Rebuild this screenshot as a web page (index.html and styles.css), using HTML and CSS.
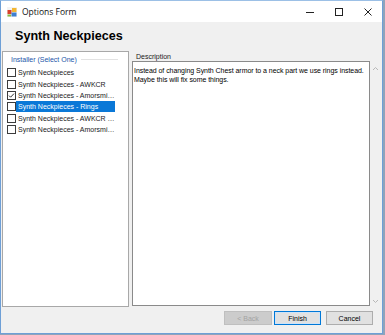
FILE: index.html
```html
<!DOCTYPE html>
<html lang="en">
<head>
  <meta charset="UTF-8" />
  <title>Options Form</title>
  <link rel="stylesheet" href="styles.css">
</head>
<body>
<div class="window">
  <div class="titlebar">
    <svg class="app-icon" width="10" height="10" viewBox="0 0 10 10">
      <rect x="0" y="0" width="10" height="10" fill="#f3f3f3"/>
      <rect x="0.5" y="3" width="4" height="4" fill="#d9412b"/>
      <rect x="5" y="1" width="4.5" height="4" fill="#f2b632"/>
      <rect x="4.5" y="5.5" width="5" height="4" fill="#3e7fd1"/>
      <rect x="0.5" y="7.5" width="3.5" height="2" fill="#8bb83e"/>
    </svg>
    <span class="title">Options Form</span>
    <div class="controls">
      <div class="ctl">
        <svg width="10" height="10" viewBox="0 0 10 10"><path d="M1 5.5h8" stroke="#222" stroke-width="1"/></svg>
      </div>
      <div class="ctl">
        <svg width="10" height="10" viewBox="0 0 10 10"><rect x="1.5" y="1.5" width="7" height="7" fill="none" stroke="#222" stroke-width="1"/></svg>
      </div>
      <div class="ctl">
        <svg width="10" height="10" viewBox="0 0 10 10"><path d="M1.5 1.5l7 7M8.5 1.5l-7 7" stroke="#222" stroke-width="1"/></svg>
      </div>
    </div>
  </div>

  <div class="header">Synth Neckpieces</div>

  <div class="main">
    <div class="installer">
      <div class="legend"><span>Installer (Select One)</span></div>
      <div class="item"><span class="box"></span><span class="label">Synth Neckpieces</span></div>
      <div class="item"><span class="box"></span><span class="label">Synth Neckpieces - AWKCR</span></div>
      <div class="item">
        <span class="box">
          <svg width="7" height="7" viewBox="0 0 7 7"><path d="M1 3.6l1.6 1.6L6 1.6" fill="none" stroke="#333" stroke-width="1"/></svg>
        </span>
        <span class="label">Synth Neckpieces - Amorsmith Extended</span>
      </div>
      <div class="item"><span class="box"></span><span class="label selected">Synth Neckpieces - Rings</span></div>
      <div class="item"><span class="box"></span><span class="label">Synth Neckpieces - AWKCR Rings</span></div>
      <div class="item"><span class="box"></span><span class="label">Synth Neckpieces - Amorsmith Rings</span></div>
    </div>

    <div class="desc">
      <div class="desc-label">Description</div>
      <div class="desc-area">
        <div class="textbox">Instead of changing Synth Chest armor to a neck part we use rings instead.<br>Maybe this will fix some things.</div>
        <div class="scroll">
          <svg width="7" height="5" viewBox="0 0 7 5"><path d="M1 4l2.5-2.5L6 4" fill="none" stroke="#b8b8b8" stroke-width="1"/></svg>
          <svg width="7" height="5" viewBox="0 0 7 5"><path d="M1 1l2.5 2.5L6 1" fill="none" stroke="#b8b8b8" stroke-width="1"/></svg>
        </div>
      </div>
    </div>
  </div>

  <div class="buttons">
    <button class="btn back" disabled>&lt; Back</button>
    <button class="btn finish">Finish</button>
    <button class="btn cancel">Cancel</button>
  </div>
</div>
</body>
</html>
```

FILE: styles.css
```css
body {
  margin: 0;
  background-color: #8fa4bb;
  font-family: "Liberation Sans", Arial, sans-serif;
  font-size: 7px;
  color: #000;
}

.window {
  width: 383px;
  height: 334px;
  box-sizing: border-box;
  border: 1px solid #6e9fd6;
  border-top-color: #9cc0e6;
  background-color: #f0f0f0;
  display: flex;
  flex-direction: column;
}

.titlebar {
  height: 21px;
  flex-shrink: 0;
  background-color: #fff;
  display: flex;
  align-items: center;
}

.app-icon {
  margin-left: 6px;
}

.title {
  margin-left: 5px;
  font-family: "Open Sans", "Noto Sans", sans-serif;
  font-size: 8.5px;
  color: #111;
}

.controls {
  margin-left: auto;
  display: flex;
}

.ctl {
  width: 29px;
  height: 21px;
  display: flex;
  align-items: center;
  justify-content: center;
}

.header {
  height: 27px;
  flex-shrink: 0;
  padding-left: 14px;
  display: flex;
  align-items: center;
  font-weight: bold;
  font-size: 12.6px;
}

.main {
  margin-top: 2px;
  height: 256px;
  flex-shrink: 0;
  display: flex;
}

.installer {
  margin-left: 1px;
  width: 127px;
  box-sizing: border-box;
  border: 1px solid #a8a8a8;
  background-color: #fff;
}

.legend {
  height: 15px;
  padding-left: 8px;
  display: flex;
  align-items: center;
  color: #1d55a8;
}

.legend::after {
  content: "";
  flex: 1;
  height: 1px;
  margin: 0 10px 0 4px;
  background-color: #e2e2e2;
}

.item {
  height: 11.4px;
  display: flex;
  align-items: center;
  color: #1a1a1a;
}

.box {
  width: 9px;
  height: 9px;
  margin-left: 4px;
  box-sizing: border-box;
  border: 1px solid #3c3c3c;
  background-color: #fff;
  display: flex;
  align-items: center;
  justify-content: center;
}

.label {
  width: 99px;
  height: 11px;
  line-height: 11px;
  padding: 0 0 0 2px;
  box-sizing: border-box;
  white-space: nowrap;
  overflow: hidden;
  text-overflow: ellipsis;
}

.label.selected {
  background-color: #0a78d7;
  color: #fff;
}

.desc {
  margin-left: 3px;
  display: flex;
  flex-direction: column;
}

.desc-label {
  height: 10px;
  padding-left: 4px;
  display: flex;
  align-items: center;
  color: #1a1a1a;
}

.desc-area {
  height: 245px;
  display: flex;
}

.textbox {
  width: 238px;
  box-sizing: border-box;
  border: 1px solid #8a8a8a;
  background-color: #fff;
  padding: 4px 1px;
  line-height: 9px;
  letter-spacing: -0.05px;
}

.scroll {
  width: 11px;
  padding: 5px 0 2px;
  display: flex;
  flex-direction: column;
  justify-content: space-between;
  align-items: center;
}

.buttons {
  padding: 4px 0 0 223px;
  display: flex;
}

.btn {
  height: 14px;
  width: 47px;
  padding: 0;
  box-sizing: border-box;
  border: 1px solid #adadad;
  background-color: #e1e1e1;
  font-family: "Liberation Sans", Arial, sans-serif;
  font-size: 7px;
  color: #000;
}

.btn.back {
  width: 48px;
  border-color: #bfbfbf;
  background-color: #cccccc;
  color: #a3a3a3;
}

.btn.finish {
  margin-left: 2px;
  border: 1px solid #0078d7;
  box-shadow: inset 0 0 0 1px #cfe3f7;
}

.btn.cancel {
  margin-left: 5px;
}
```
